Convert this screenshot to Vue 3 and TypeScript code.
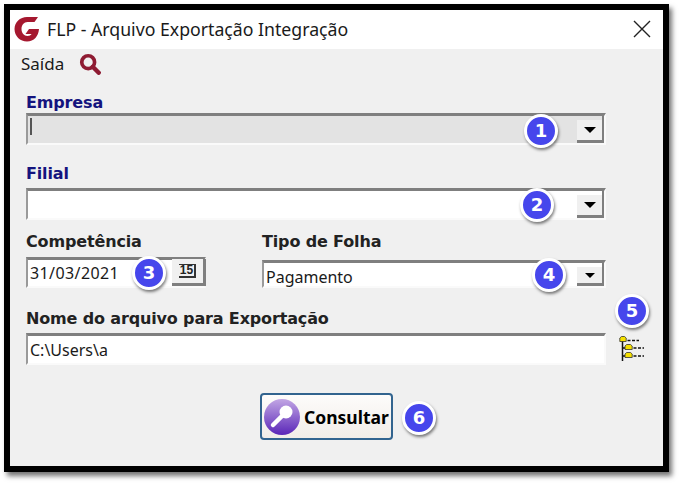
<template>
  <div class="page">
    <div class="window">
      <header class="titlebar">
        <svg class="logo" viewBox="0 0 26 26" aria-hidden="true">
          <path d="M24 1 L20.500 6 H13.500 C10 6 7.500 9 7.500 13 C7.500 17 10 20 13.500 20 C15.500 20 16.800 19.200 17.600 18 H11.500 L15 13 H25 C24.500 20 20 25.500 13 25.500 C6 25.500 0.500 20 0.500 13 C0.500 6 6 1 13 1 Z" fill="#a5182f" />
        </svg>
        <span class="title">FLP - Arquivo Exportação Integração</span>
        <svg class="close" viewBox="0 0 18 18" aria-hidden="true">
          <path d="M1 1 L17 17 M17 1 L1 17" stroke="#222" stroke-width="1.400" fill="none" />
        </svg>
      </header>

      <nav class="menubar">
        <span class="menu-item">Saída</span>
        <svg class="search" viewBox="0 0 24 24" aria-hidden="true">
          <circle cx="10" cy="10" r="7" fill="none" stroke="#8e1b32" stroke-width="4" />
          <path d="M15 15 L21.500 21.500" stroke="#8e1b32" stroke-width="4.800" stroke-linecap="round" />
        </svg>
      </nav>

      <form class="form" @submit.prevent>
        <label class="label navy">Empresa</label>
        <div class="field tall disabled">
          <span class="caret"></span>
          <button type="button" class="drop"><i></i></button>
          <span class="badge b1">1</span>
        </div>

        <label class="label navy second">Filial</label>
        <div class="field tall">
          <button type="button" class="drop"><i></i></button>
          <span class="badge b2">2</span>
        </div>

        <div class="row">
          <div class="col-date">
            <label class="label">Competência</label>
            <div class="field date">
              <span class="value spaced">31/03/2021</span>
              <button type="button" class="cal"><span>15</span></button>
              <span class="badge b3">3</span>
            </div>
          </div>
          <div class="col-type">
            <label class="label">Tipo de Folha</label>
            <div class="field type">
              <span class="value low">Pagamento</span>
              <button type="button" class="drop small"><i></i></button>
              <span class="badge b4">4</span>
            </div>
          </div>
        </div>

        <label class="label export">Nome do arquivo para Exportação</label>
        <div class="path-row">
          <div class="field path">
            <span class="value">C:\Users\a</span>
          </div>
          <svg class="tree" viewBox="0 0 26 26" aria-hidden="true">
            <path d="M3.500 4 V25 M3.500 12 H6 M3.500 20 H6" stroke="#111" stroke-width="1.500" fill="none" />
            <path d="M8.500 4.500 H20 M14.500 12 H25 M14.500 20 H25" stroke="#111" stroke-width="1.500" stroke-dasharray="3 1.500" fill="none" />
            <path d="M0.800 5.500 V2 L2.500 0.500 H5.500 L7.200 2 V5.500 Z" fill="#f5e000" stroke="#333" stroke-width="0.800" />
            <path d="M6 13.500 V10 L7.700 8.500 H11.500 L13.200 10 V13.500 Z" fill="#f5e000" stroke="#333" stroke-width="0.800" />
            <path d="M6 21.500 V18 L7.700 16.500 H11.500 L13.200 18 V21.500 Z" fill="#f5e000" stroke="#333" stroke-width="0.800" />
          </svg>
          <span class="badge b5">5</span>
        </div>

        <div class="actions">
          <button type="button" class="consult">
            <svg class="key" viewBox="0 0 36 36" aria-hidden="true">
              <defs>
                <linearGradient id="keyBg" x1="0" y1="0" x2="0" y2="1">
                  <stop offset="0" stop-color="#c2a6e4" />
                  <stop offset="1" stop-color="#5a26b8" />
                </linearGradient>
              </defs>
              <circle cx="18" cy="18" r="18" fill="url(#keyBg)" />
              <circle cx="22" cy="13" r="6.500" fill="#fff" />
              <path d="M18 17 L9 26" stroke="#fff" stroke-width="4.500" stroke-linecap="round" />
            </svg>
            <span>Consultar</span>
          </button>
          <span class="badge b6">6</span>
        </div>
      </form>
    </div>
  </div>
</template>

<script setup lang="ts">
</script>

<style>
html,
body {
  margin: 0;
  background: #fff;
}
</style>

<style scoped>
.page {
  width: 682px;
  height: 485px;
  padding: 4px 0 0 4px;
  box-sizing: border-box;
  overflow: hidden;
  font-family: "Noto Sans", "Open Sans", sans-serif;
  color: #1a1a1a;
}
.window {
  width: 665px;
  height: 468px;
  box-sizing: border-box;
  border: 6px solid #000;
  background: #f0f0f0;
  box-shadow: 3px 4px 5px rgba(0, 0, 0, 0.55);
  position: relative;
}
.titlebar {
  height: 39px;
  background: #fff;
  display: flex;
  align-items: center;
  padding: 0 10px 2px 4px;
  box-sizing: border-box;
}
.logo {
  width: 26px;
  height: 26px;
}
.title {
  margin-left: 7px;
  font-size: 17.7px;
  flex: 1;
}
.close {
  width: 18px;
  height: 18px;
  margin-right: 2px;
}
.menubar {
  height: 30px;
  box-sizing: border-box;
  display: flex;
  align-items: center;
  padding: 0 0 1px 11px;
}
.menu-item {
  font-size: 17px;
}
.search {
  width: 22px;
  height: 22px;
  margin-left: 15px;
}
.form {
  padding: 13px 0 0 16px;
  margin: 0;
}
.label {
  display: block;
  height: 21px;
  line-height: 21px;
  font-family: "DejaVu Sans", sans-serif;
  font-size: 16px;
  font-weight: 700;
  letter-spacing: -0.15px;
  color: #222;
  white-space: nowrap;
}
.navy {
  color: #14147e;
}
.second {
  margin-top: 17px;
  height: 26px;
  line-height: 24px;
}
.field {
  position: relative;
  background: #fff;
  border-top: 3px solid #7f7f7f;
  border-left: 2px solid #9a9a9a;
  border-right: 2px solid #fafafa;
  border-bottom: 2px solid #fafafa;
  box-sizing: border-box;
  display: flex;
  align-items: center;
}
.tall {
  width: 580px;
  height: 32px;
}
.disabled {
  background: #e3e3e3;
}
.caret {
  width: 2px;
  height: 17px;
  background: #555;
  margin-left: 2px;
  align-self: flex-start;
  margin-top: 2px;
}
.drop {
  position: absolute;
  right: 0;
  top: 0;
  width: 27px;
  height: 27px;
  padding: 4px 0 0;
  background: linear-gradient(transparent 4px, #f0f0f0 4px);
  border: none;
  border-right: 2px solid #7f7f7f;
  border-bottom: 3px solid #7f7f7f;
  display: flex;
  align-items: center;
  justify-content: center;
}
.drop.small {
  height: 23px;
}
.drop i {
  width: 0;
  height: 0;
  border-left: 6px solid transparent;
  border-right: 6px solid transparent;
  border-top: 6px solid #000;
}
.drop.small i {
  border-left-width: 5px;
  border-right-width: 5px;
  border-top-width: 5px;
}
.row {
  display: flex;
  margin-top: 9px;
}
.col-date {
  width: 236px;
}
.col-type {
  width: 344px;
}
.col-date .label,
.col-type .label {
  height: 23px;
  line-height: 25px;
}
.date {
  width: 180px;
  height: 31px;
  margin-top: 5px;
  border-right-color: #f4f4f4;
}
.type {
  width: 344px;
  height: 28px;
  margin-top: 8px;
}
.value {
  font-size: 16px;
  margin-left: 2px;
}
.spaced {
  letter-spacing: 0.4px;
}
.low {
  margin-top: 4px;
}
.cal {
  position: absolute;
  right: -2px;
  top: -1px;
  width: 34px;
  height: 27px;
  padding: 0;
  background: #f0f0f0;
  border: none;
  border-right: 3px solid #7f7f7f;
  border-bottom: 3px solid #7f7f7f;
  display: flex;
  align-items: center;
  justify-content: center;
  font-family: "Liberation Sans", sans-serif;
  font-size: 12px;
  font-weight: 700;
  line-height: 11px;
  color: #222;
}
.cal span {
  border-top: 1px solid #333;
  border-bottom: 2px solid #333;
  border-right: 2px solid #333;
  padding: 0 1px;
}
.export {
  margin-top: 18px;
  height: 27px;
  line-height: 25px;
}
.path-row {
  position: relative;
  display: flex;
  align-items: center;
}
.path {
  width: 580px;
  height: 32px;
}
.tree {
  width: 26px;
  height: 26px;
  margin-left: 13px;
}
.actions {
  position: relative;
  display: flex;
  justify-content: center;
  margin-top: 28px;
  width: 600px;
}
.consult {
  width: 133px;
  height: 47px;
  margin-left: 1px;
  padding: 0 0 0 2px;
  box-sizing: border-box;
  border: 2px solid #32648f;
  border-radius: 4px;
  background: linear-gradient(#fdfcfb, #f2ede8);
  display: flex;
  align-items: center;
  font-family: "Noto Sans", sans-serif;
  font-size: 17.5px;
  font-weight: 700;
  color: #000;
}
.key {
  width: 36px;
  height: 36px;
  margin-right: 4px;
}
.badge {
  position: absolute;
  width: 28px;
  height: 28px;
  box-sizing: content-box;
  border: 3px solid #fff;
  border-radius: 50%;
  background: #4646ec;
  color: #fff;
  font-family: "DejaVu Sans", sans-serif;
  font-size: 18px;
  font-weight: 700;
  line-height: 28px;
  text-align: center;
  box-shadow: 1px 2px 3px rgba(0, 0, 0, 0.5);
  z-index: 2;
}
.b1 {
  left: 496px;
  top: -2px;
}
.b2 {
  left: 492px;
  top: -3px;
}
.b3 {
  left: 104px;
  top: -4px;
}
.b4 {
  left: 268px;
  top: -5px;
}
.b5 {
  left: 589px;
  top: -39px;
}
.b6 {
  left: 376px;
  top: 8px;
}
</style>
